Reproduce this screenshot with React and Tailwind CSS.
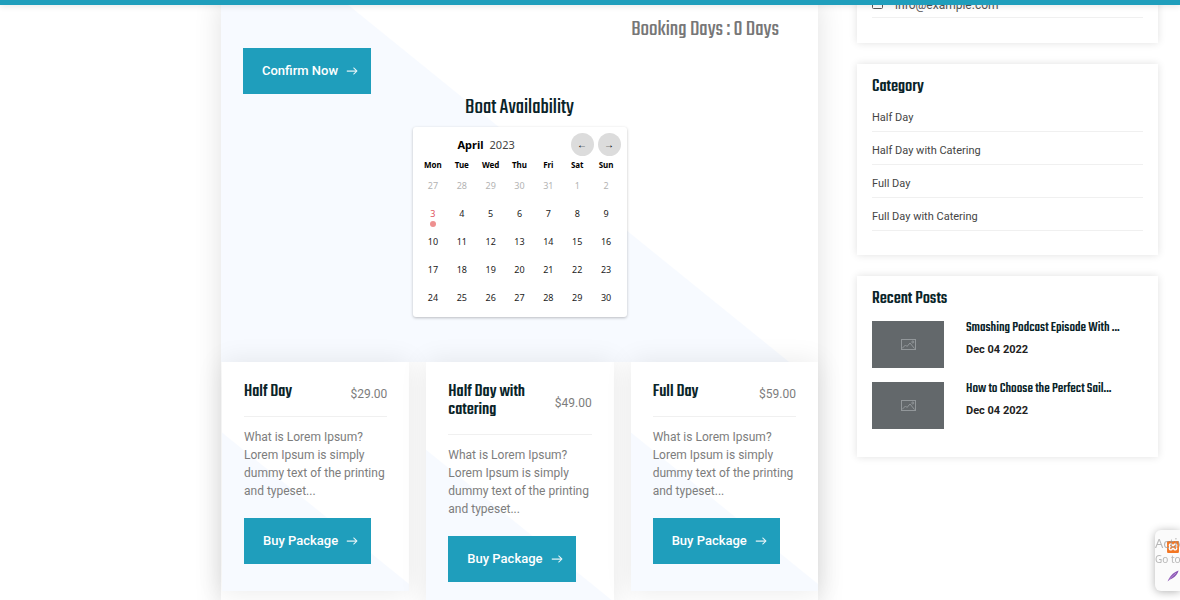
import { SiXampp } from "react-icons/si";
import { BsArrowRight } from "react-icons/bs";

const heading = "font-['Teko','Roboto_Condensed',Roboto,sans-serif]";

const weekdays = ["Mon", "Tue", "Wed", "Thu", "Fri", "Sat", "Sun"];
const previousMonth = [27, 28, 29, 30, 31, 1, 2];
const currentDays = Array.from({ length: 28 }, (_, i) => i + 3);

const packages = [
  { name: "Half Day", price: "$29.00", shade: "bg-[linear-gradient(219deg,#fff_172px,#f7faff_173px)]" },
  { name: "Half Day with catering", price: "$49.00", shade: "bg-[linear-gradient(219deg,#fff_186px,#f7faff_187px)]" },
  { name: "Full Day", price: "$59.00", shade: "bg-[linear-gradient(219deg,#fff_172px,#f7faff_173px)]" },
];

const categories = ["Half Day", "Half Day with Catering", "Full Day", "Full Day with Catering"];
const posts = ["Smashing Podcast Episode With ...", "How to Choose the Perfect Sail..."];

function ActionButton({ children }) {
  return (
    <button
      type="button"
      className="flex h-[46px] items-center gap-2 bg-[#1f9ebc] pr-[13px] pl-[19px] text-[13px] font-medium whitespace-nowrap text-white"
    >
      {children}
      <BsArrowRight className="size-3" stroke="currentColor" strokeWidth="0.4" />
    </button>
  );
}

function Calendar() {
  return (
    <div className="mx-auto mt-1.5 w-[214px] rounded-[3px] bg-white px-[6px] pt-[6px] font-['Noto_Sans',sans-serif] shadow-[0_1px_3px_rgba(0,0,0,0.25)]">
      <div className="flex items-center">
        <p className="flex-1 pl-[39px] text-[11px] leading-4 text-[#444]">
          <strong className="mr-1.5 font-bold text-black">April</strong>2023
        </p>
        <div className="flex gap-1">
          <button type="button" aria-label="Previous month" className="size-[23px] rounded-full bg-[#dcdcdc] pb-0.5 text-[10px] leading-none text-black">
            ←
          </button>
          <button type="button" aria-label="Next month" className="size-[23px] rounded-full bg-[#dcdcdc] pb-0.5 text-[10px] leading-none text-black">
            →
          </button>
        </div>
      </div>
      <div className="grid grid-cols-7 text-center text-[9px] leading-[18px]">
        {weekdays.map((d) => (
          <span key={d} className="h-[21px] text-[8px] leading-[17px] font-bold text-black">
            {d}
          </span>
        ))}
        {previousMonth.map((d) => (
          <span key={d} className="h-7 text-[#b3b3b3]">
            {d}
          </span>
        ))}
        {currentDays.map((d) =>
          d === 3 ? (
            <span key={d} className="flex h-7 flex-col items-center text-[#e0525c]">
              {d}
              <i className="-mt-0.5 size-1.5 rounded-full bg-[#ee9090]" />
            </span>
          ) : (
            <span key={d} className="h-7 text-[#222]">
              {d}
            </span>
          ),
        )}
      </div>
    </div>
  );
}

function PackageCard({ name, price, shade }) {
  return (
    <article className={`px-[22px] pt-[21px] pb-[27px] shadow-[0_0_26px_rgba(0,0,0,0.09)] ${shade}`}>
      <header className="flex items-center justify-between border-b border-[#f0f0f0] pb-[15px]">
        <h3 className={`${heading} max-w-[90px] text-[18px] leading-[18px] font-medium text-[#0a2429]`}>{name}</h3>
        <span className="pt-1 text-[12px] leading-[14px] text-[#7d7d7d]">{price}</span>
      </header>
      <p className="mt-[11px] mb-[18px] text-[12px] leading-[18px] text-[#7d7d7d]">
        What is Lorem Ipsum?
        <br />
        Lorem Ipsum is simply dummy text of the printing and typeset...
      </p>
      <ActionButton>Buy Package</ActionButton>
    </article>
  );
}

function Panel({ title, children }) {
  return (
    <section className="bg-white px-[15px] pt-[13px] pb-[24px] shadow-[0_0_8px_rgba(0,0,0,0.12)]">
      <h2 className={`${heading} text-[18px] leading-[20px] font-medium text-[#0a2429]`}>{title}</h2>
      {children}
    </section>
  );
}

function PhotoPlaceholder() {
  return (
    <div className="flex h-[47px] w-[72px] shrink-0 items-center justify-center bg-[#63686b]">
      <svg viewBox="0 0 15 11" className="h-[11px] w-[15px]" fill="none" stroke="#92979a">
        <rect x="0.5" y="0.5" width="14" height="10" />
        <path d="M1 9.5 4.5 6 6 7.5 9 4 13.5 9.5" />
        <circle cx="11.8" cy="3" r="1" />
      </svg>
    </div>
  );
}

export default function App() {
  return (
    <div className="h-screen overflow-hidden bg-white font-['Roboto',sans-serif]">
      <div className="fixed inset-x-0 top-0 z-10 h-[5px] bg-[#1f9ebc] shadow-[0_1px_6px_rgba(0,0,0,0.12)]" />
      <div className="flex items-start gap-[39px] pr-[22px] pl-[221px]">
        <main className="min-h-screen min-w-0 flex-1 bg-white shadow-[0_0_26px_rgba(0,0,0,0.12)]">
          <div className="h-[362px] bg-[linear-gradient(219deg,#fff_299px,#f7faff_300px)] px-[22px] pt-[18px]">
            <p className={`${heading} pr-[17px] text-right text-[23px] leading-6 text-[#777]`}>Booking Days : 0 Days</p>
            <div className="mt-1.5 flex">
              <ActionButton>Confirm Now</ActionButton>
            </div>
            <h2 className={`${heading} text-center text-[23px] leading-[27px] text-[#0a2429]`}>Boat Availability</h2>
            <Calendar />
          </div>
          <div className="grid grid-cols-3 items-start gap-[17px] pl-px">
            {packages.map((p) => (
              <PackageCard key={p.name} {...p} />
            ))}
          </div>
        </main>

        <aside className="flex w-[301px] shrink-0 flex-col gap-[21px]">
          <section className="bg-white px-[15px] pb-[25px] shadow-[0_0_8px_rgba(0,0,0,0.12)]">
            <div className="flex h-[18px] items-start gap-3 border-b border-[#f0f0f0] text-[12px] leading-[10px] text-[#555]">
              <svg viewBox="0 0 11 9" className="h-[9px] w-[11px]" fill="none" stroke="currentColor">
                <rect x="0.5" y="0.5" width="10" height="8" rx="1" />
              </svg>
              info@example.com
            </div>
          </section>
          <Panel title="Category">
            <ul className="mt-0.5">
              {categories.map((c) => (
                <li key={c} className="h-[33px] border-b border-[#f0f0f0] pt-[11px] text-[11px] leading-4 text-[#444]">
                  <a href="#category">{c}</a>
                </li>
              ))}
            </ul>
          </Panel>
          <Panel title="Recent Posts">
            <ul className="mt-3 flex flex-col gap-3.5 pb-1">
              {posts.map((p) => (
                <li key={p} className="flex gap-[22px]">
                  <PhotoPlaceholder />
                  <div>
                    <h3 className={`${heading} text-[14px] leading-[14px] font-medium whitespace-nowrap text-[#0a2429]`}>
                      <a href="#post">{p}</a>
                    </h3>
                    <p className="mt-[7px] text-[11px] leading-[16px] font-bold text-[#222]">Dec 04 2022</p>
                  </div>
                </li>
              ))}
            </ul>
          </Panel>
        </aside>
      </div>

      <div className="fixed right-0 bottom-[9px] z-10 h-[61px] w-[25px] overflow-hidden rounded-l-md bg-[#fbfbfb] shadow-[0_1px_8px_rgba(0,0,0,0.3)]">
        <div className="flex flex-col items-end gap-[17px] pt-[11px]">
          <SiXampp className="mr-px size-3 text-[#f37623]" />
          <svg viewBox="0 0 12 12" className="mr-px size-3">
            <path d="M0.5 11.5 2 8.5C4 5 7 2 11.5 0.5 11 4 8 7.5 3 9.5Z" fill="#8b56b5" />
            <path d="M2 9.5 9 3" stroke="#c9a4dd" strokeWidth="0.7" />
          </svg>
        </div>
        <div className="absolute top-[5px] left-0 font-['Noto_Sans',sans-serif] whitespace-nowrap text-[#9a9a9a]/70">
          <p className="text-[13px] leading-4">Activate Windows</p>
          <p className="text-[10px] leading-4">Go to Settings</p>
        </div>
      </div>
    </div>
  );
}
